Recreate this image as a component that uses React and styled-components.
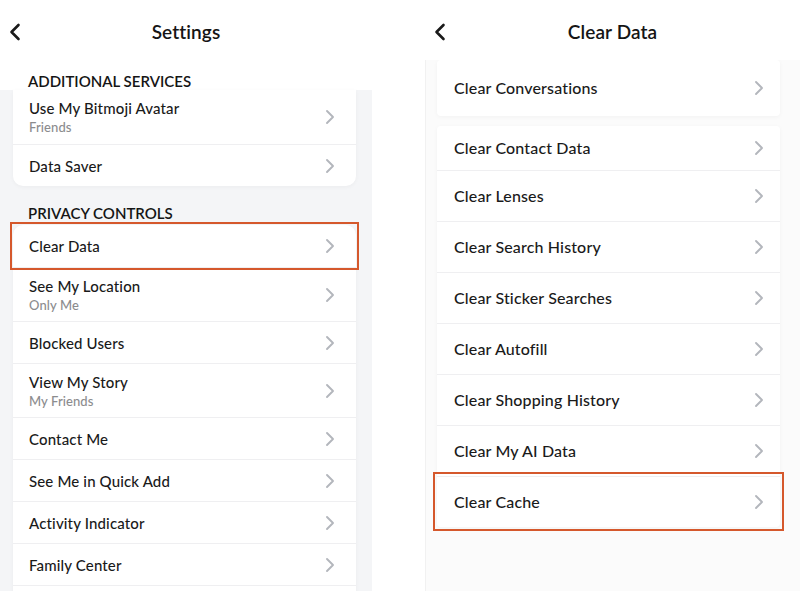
import React from 'react';
import styled, { createGlobalStyle } from 'styled-components';

const GlobalStyle = createGlobalStyle`
  html, body {
    margin: 0;
    padding: 0;
    background: #ffffff;
  }
  body {
    font-family: 'Lato', 'Noto Sans', sans-serif;
    color: #1c1c1e;
  }
`;

const Page = styled.div`
  width: 800px;
  height: 591px;
  overflow: hidden;
  display: flex;
  background: #ffffff;
`;

const Screen = styled.div`
  width: ${({ $width }) => $width}px;
  margin-left: ${({ $offset }) => $offset || 0}px;
  display: flex;
  flex-direction: column;
  flex-shrink: 0;
`;

const Header = styled.div`
  height: ${({ $height }) => $height}px;
  display: flex;
  align-items: center;
  justify-content: center;
  position: relative;
  background: #ffffff;
  flex-shrink: 0;
`;

const BackButton = styled.div`
  position: absolute;
  left: ${({ $left }) => $left}px;
  top: 23px;
  width: 12px;
  height: 18px;
`;

const Title = styled.div`
  font-size: 19px;
  font-weight: 600;
  letter-spacing: 0.1px;
  margin-top: ${({ $shift }) => $shift || 0}px;
  color: #151515;
`;

const SectionLabel = styled.div`
  font-size: 15px;
  font-weight: 600;
  text-transform: uppercase;
  color: #151515;
  padding: ${({ $pad }) => $pad};
  line-height: 18px;
`;

const Body = styled.div`
  flex: 1;
  background: ${({ $bg }) => $bg};
  padding: ${({ $pad }) => $pad};
  display: flex;
  flex-direction: column;
  box-shadow: ${({ $edge }) => ($edge ? 'inset 1px 0 0 #f1f1f1' : 'none')};
`;

const Card = styled.div`
  background: #ffffff;
  border-radius: ${({ $radius }) => $radius};
  box-shadow: 0 1px 4px rgba(0, 0, 0, 0.04);
  margin-bottom: ${({ $gap }) => $gap || 0}px;
  display: flex;
  flex-direction: column;
`;

const Row = styled.div`
  height: ${({ $height }) => $height}px;
  flex-shrink: 0;
  display: flex;
  align-items: center;
  justify-content: space-between;
  padding: 0 ${({ $padR }) => $padR}px 0 ${({ $padL }) => $padL}px;
  border-top: ${({ $first }) => ($first ? 'none' : '1px solid #efeff1')};
  box-sizing: border-box;
  outline: ${({ $highlight }) => ($highlight ? '2px solid #d5582c' : 'none')};
  outline-offset: ${({ $offset }) => $offset || 0}px;
  position: relative;
  z-index: ${({ $highlight }) => ($highlight ? 1 : 0)};
`;

const RowText = styled.div`
  display: flex;
  flex-direction: column;
`;

const RowTitle = styled.div`
  font-size: ${({ $size }) => $size}px;
  font-weight: 500;
  letter-spacing: 0.15px;
  color: #1a1a1a;
  line-height: 20px;
`;

const RowSub = styled.div`
  font-size: 13px;
  font-weight: 500;
  letter-spacing: 0.1px;
  color: #8c8c8e;
  line-height: 17px;
  margin-top: 1px;
`;

const BackIcon = () => (
  <svg width="12" height="18" viewBox="0 0 12 18">
    <polyline
      points="9.5,2 2.5,9 9.5,16"
      fill="none"
      stroke="#1a1a1a"
      strokeWidth="2.6"
      strokeLinecap="round"
      strokeLinejoin="round"
    />
  </svg>
);

const Chevron = () => (
  <svg width="10" height="16" viewBox="0 0 10 16">
    <polyline
      points="2,2 8,8 2,14"
      fill="none"
      stroke="#b3b6bc"
      strokeWidth="1.9"
      strokeLinecap="round"
      strokeLinejoin="round"
    />
  </svg>
);

const additional = [
  { title: 'Use My Bitmoji Avatar', sub: 'Friends' },
  { title: 'Data Saver' },
];

const privacy = [
  { title: 'Clear Data', highlight: true },
  { title: 'See My Location', sub: 'Only Me' },
  { title: 'Blocked Users' },
  { title: 'View My Story', sub: 'My Friends' },
  { title: 'Contact Me' },
  { title: 'See Me in Quick Add' },
  { title: 'Activity Indicator' },
  { title: 'Family Center' },
];

const clearItems = [
  'Clear Contact Data',
  'Clear Lenses',
  'Clear Search History',
  'Clear Sticker Searches',
  'Clear Autofill',
  'Clear Shopping History',
  'Clear My AI Data',
  'Clear Cache',
];

const SettingsRow = ({ item, first }) => (
  <Row
    $height={item.sub ? 54 : 42}
    $padL={16}
    $padR={21}
    $first={first}
    $highlight={item.highlight}
    $offset={1}
  >
    <RowText>
      <RowTitle $size={15}>{item.title}</RowTitle>
      {item.sub && <RowSub>{item.sub}</RowSub>}
    </RowText>
    <Chevron />
  </Row>
);

const ClearRow = ({ title, height, first, highlight }) => (
  <Row
    $height={height}
    $padL={17}
    $padR={16}
    $first={first}
    $highlight={highlight}
    $offset={2}
  >
    <RowTitle $size={16}>{title}</RowTitle>
    <Chevron />
  </Row>
);

const App = () => {
  return (
    <>
      <GlobalStyle />
      <Page>
        <Screen $width={372}>
          <Header $height={62}>
            <BackButton $left={9}>
              <BackIcon />
            </BackButton>
            <Title>Settings</Title>
          </Header>
          <SectionLabel $pad="10px 0 0 28px">Additional Services</SectionLabel>
          <Body $bg="#f4f5f7" $pad="0 16px 0 13px">
            <Card $radius="0 0 10px 10px">
              {additional.map((item, i) => (
                <SettingsRow key={item.title} item={item} first={i === 0} />
              ))}
            </Card>
            <SectionLabel $pad="18px 0 3px 15px">Privacy Controls</SectionLabel>
            <Card $radius="10px">
              {privacy.map((item, i) => (
                <SettingsRow key={item.title} item={item} first={i === 0} />
              ))}
              {/* next row, scrolled below the fold */}
              <Row $height={42} $padL={16} $padR={21} />
            </Card>
          </Body>
        </Screen>

        <Screen $width={375} $offset={53}>
          <Header $height={60}>
            <BackButton $left={9}>
              <BackIcon />
            </BackButton>
            <Title $shift={2}>Clear Data</Title>
          </Header>
          <Body $bg="#fbfbfb" $pad="0 20px 0 12px" $edge>
            <Card $radius="4px" $gap={10}>
              <ClearRow title="Clear Conversations" height={56} first />
            </Card>
            <Card $radius="4px">
              {clearItems.map((title, i) => (
                <ClearRow
                  key={title}
                  title={title}
                  height={i === 0 ? 44 : 51}
                  first={i === 0}
                  highlight={title === 'Clear Cache'}
                />
              ))}
            </Card>
          </Body>
        </Screen>
      </Page>
    </>
  );
};

export default App;
